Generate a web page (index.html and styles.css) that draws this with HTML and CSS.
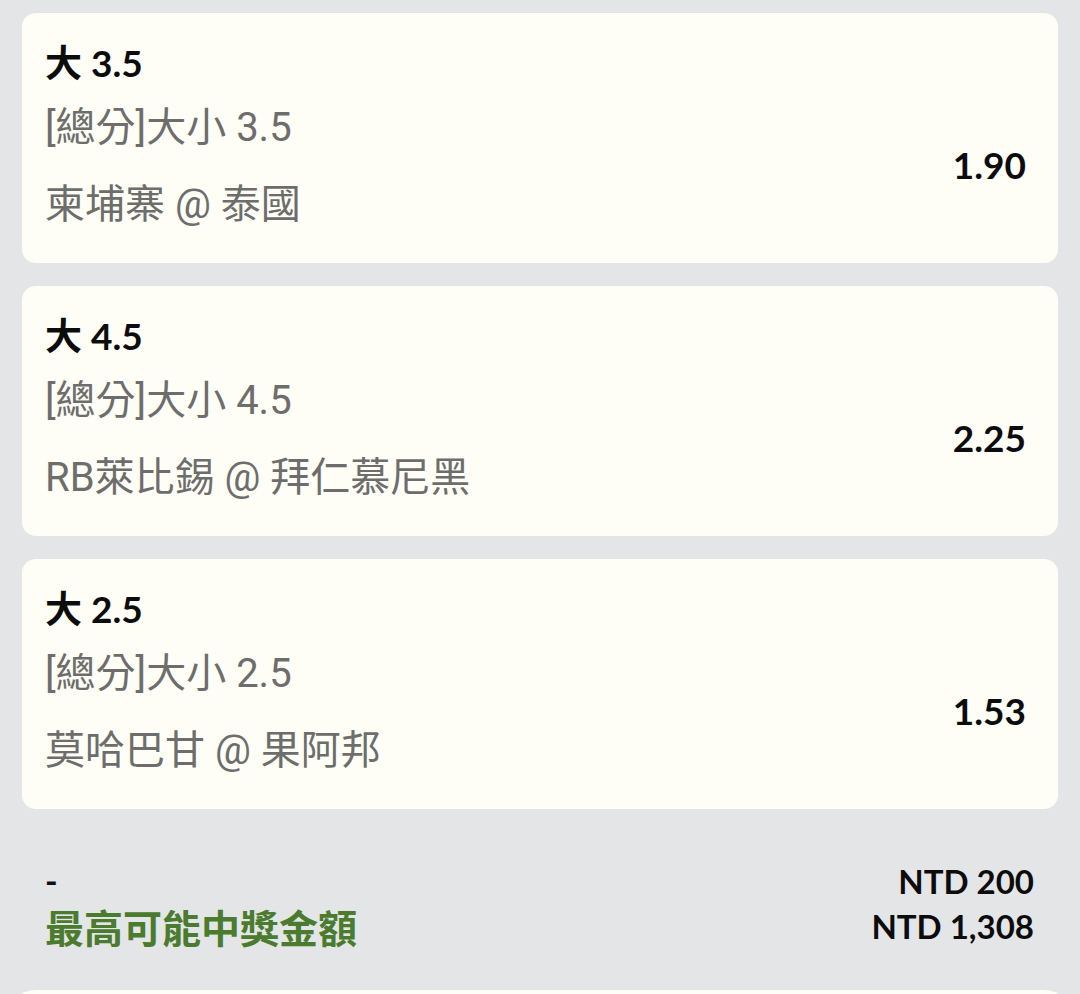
FILE: index.html
```html
<!DOCTYPE html>
<html lang="zh-Hant">
<head>
<meta charset="utf-8">
<title>投注單</title>
<link rel="stylesheet" href="styles.css">
</head>
<body>
<main class="page">
  <section class="bets">
    <article class="bet">
      <div class="bet-info">
        <div class="bet-title">大 3.5</div>
        <div class="bet-market">[總分]大小 3.5</div>
        <div class="bet-match">柬埔寨 @ 泰國</div>
      </div>
      <div class="bet-odds">1.90</div>
    </article>
    <article class="bet">
      <div class="bet-info">
        <div class="bet-title">大 4.5</div>
        <div class="bet-market">[總分]大小 4.5</div>
        <div class="bet-match">RB萊比錫 @ 拜仁慕尼黑</div>
      </div>
      <div class="bet-odds">2.25</div>
    </article>
    <article class="bet">
      <div class="bet-info">
        <div class="bet-title">大 2.5</div>
        <div class="bet-market">[總分]大小 2.5</div>
        <div class="bet-match">莫哈巴甘 @ 果阿邦</div>
      </div>
      <div class="bet-odds">1.53</div>
    </article>
  </section>
  <section class="summary">
    <div class="summary-row">
      <span class="summary-dash">-</span>
      <span class="summary-amount">NTD 200</span>
    </div>
    <div class="summary-row">
      <span class="summary-label">最高可能中獎金額</span>
      <span class="summary-amount">NTD 1,308</span>
    </div>
  </section>
  <div class="next-card"></div>
</main>
</body>
</html>
```

FILE: styles.css
```css
* { box-sizing: border-box; }
html, body {
  margin: 0;
  padding: 0;
  background: #e4e5e7;
  overflow: hidden;
}
body {
  font-family: Lato, "Noto Sans CJK TC", sans-serif;
  color: #111;
  height: 994px;
}
.page {
  padding: 13px 22px 0;
  height: 994px;
  overflow: hidden;
}
.bets {
  display: flex;
  flex-direction: column;
  gap: 23px;
}
.bet {
  height: 250px;
  background: #fefef7;
  border-radius: 14px;
  display: flex;
  justify-content: space-between;
  padding: 26px 32px 33px 23px;
}
.bet-info {
  display: flex;
  flex-direction: column;
}
.bet-title {
  font-family: Lato, "Noto Sans CJK TC", sans-serif;
  font-weight: 700;
  font-size: 37px;
  line-height: 48px;
  height: 48px;
  color: #0c0c0c;
}
.bet-market, .bet-match {
  font-family: Roboto, "Noto Sans CJK TC", sans-serif;
  font-weight: 400;
  font-size: 40px;
  line-height: 50px;
  height: 50px;
  color: #6d6d6b;
}
.bet-market { margin-top: 16px; }
.bet-match { margin-top: 27px; }
.bet-odds {
  margin-top: 64px;
  display: flex;
  align-items: center;
  font-family: Lato, sans-serif;
  font-weight: 700;
  font-size: 37px;
  color: #0c0c0c;
  padding-bottom: 4px;
}
.summary {
  padding: 49px 24px 0 23px;
  display: flex;
  flex-direction: column;
}
.summary-row {
  display: flex;
  justify-content: space-between;
  align-items: center;
  height: 45px;
}
.summary-dash {
  font-family: Lato, sans-serif;
  font-weight: 700;
  font-size: 34px;
  color: #111;
}
.summary-label {
  font-family: "Noto Sans CJK TC", sans-serif;
  font-weight: 700;
  font-size: 39px;
  color: #4a7b2e;
}
.summary-amount {
  font-family: Lato, sans-serif;
  font-weight: 700;
  font-size: 33px;
  color: #0c0c0c;
}
.next-card {
  margin: 42px -16px 0;
  height: 60px;
  background: #fefef7;
  border-radius: 30px 30px 0 0;
}
```
